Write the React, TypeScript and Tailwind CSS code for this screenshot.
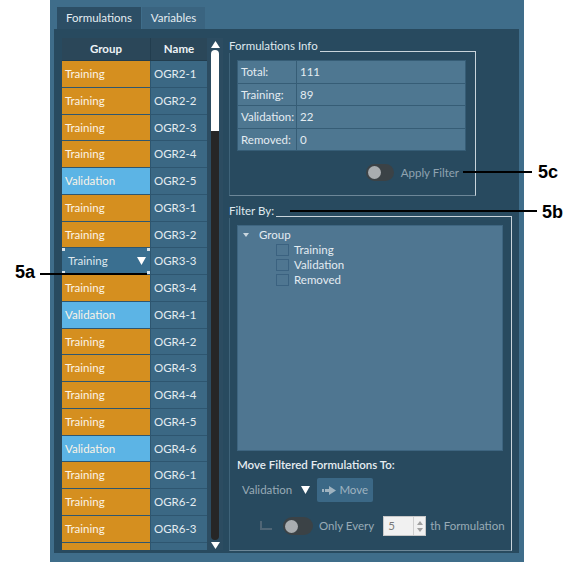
import React from 'react';

type Row = { group: 'Training' | 'Validation'; name: string; selected?: boolean };

const rows: Row[] = [
  { group: 'Training', name: 'OGR2-1' },
  { group: 'Training', name: 'OGR2-2' },
  { group: 'Training', name: 'OGR2-3' },
  { group: 'Training', name: 'OGR2-4' },
  { group: 'Validation', name: 'OGR2-5' },
  { group: 'Training', name: 'OGR3-1' },
  { group: 'Training', name: 'OGR3-2' },
  { group: 'Training', name: 'OGR3-3', selected: true },
  { group: 'Training', name: 'OGR3-4' },
  { group: 'Validation', name: 'OGR4-1' },
  { group: 'Training', name: 'OGR4-2' },
  { group: 'Training', name: 'OGR4-3' },
  { group: 'Training', name: 'OGR4-4' },
  { group: 'Training', name: 'OGR4-5' },
  { group: 'Validation', name: 'OGR4-6' },
  { group: 'Training', name: 'OGR6-1' },
  { group: 'Training', name: 'OGR6-2' },
  { group: 'Training', name: 'OGR6-3' },
  { group: 'Training', name: '' },
];

const info = [
  ['Total:', '111'],
  ['Training:', '89'],
  ['Validation:', '22'],
  ['Removed:', '0'],
];

function Toggle({ w, h }: { w: string; h: string }) {
  return (
    <div className={`${w} ${h} shrink-0 rounded-full bg-[#3b4246] flex items-center pl-[2px]`}>
      <div className="w-[13px] h-[13px] rounded-full bg-[#a9adb0]" />
    </div>
  );
}

function Corner({ pos }: { pos: string }) {
  return <div className={`absolute w-[3px] h-[3px] bg-white/80 ${pos}`} />;
}

function GroupCell({ row }: { row: Row }) {
  if (row.selected) {
    return (
      <div className="relative w-[89px] shrink-0 border-r border-[#2e5670] bg-[#3a6f90] flex items-center justify-between pl-[6px] pr-[4px] text-[#dfe8ee]">
        <span>Training</span>
        <svg width="9" height="8" viewBox="0 0 9 8">
          <path d="M0 0 H9 L4.5 8 Z" fill="#ffffff" />
        </svg>
        <Corner pos="left-0 top-0" />
        <Corner pos="right-0 top-0" />
        <Corner pos="left-0 bottom-0" />
        <Corner pos="right-0 bottom-0" />
      </div>
    );
  }
  const bg = row.group === 'Training' ? 'bg-[#d58f1f]' : 'bg-[#5cb4e5]';
  return (
    <div className={`w-[89px] shrink-0 border-r border-[#2e5670] ${bg} flex items-center pl-[3px] text-[#fbf3e6]`}>
      {row.name ? row.group : ''}
    </div>
  );
}

export default function App() {
  return (
    <div className="relative w-[583px] h-[562px] bg-white overflow-hidden font-['Lato',sans-serif] text-[11.5px] leading-none">
      <div className="ml-[50px] w-[474px] h-full bg-[#3f6d8a] flex flex-col pt-[7px] pl-[4px] pr-[5px] pb-[9px]">
        {/* Tabs */}
        <div className="flex pl-[3px] h-[22px] shrink-0">
          <div className="w-[84px] bg-[#2c4e65] text-[#e4ecf1] flex items-center justify-center">Formulations</div>
          <div className="w-[63px] ml-px bg-[#3a6480] text-[#e4ecf1] flex items-center justify-center">Variables</div>
        </div>

        {/* Panel */}
        <div className="flex-1 bg-[#284a5f] flex pl-[8px] pt-[9px]">
          {/* Table */}
          <div className="w-[145px] h-[512px] overflow-hidden flex flex-col shrink-0">
            <div className="h-[23px] shrink-0 flex bg-[#2b4759] border-b border-[#223d4e] font-bold text-[#eef3f6]">
              <div className="w-[89px] border-r border-[#223d4e] flex items-center justify-center">Group</div>
              <div className="flex-1 flex items-center justify-center">Name</div>
            </div>
            {rows.map((r, i) => (
              <div key={i} className="h-[26.75px] shrink-0 flex border-b border-[#2e5670]">
                <GroupCell row={r} />
                <div className="flex-1 bg-[#3b6884] flex items-center pl-[3px] text-[#e4ecf1]">{r.name}</div>
              </div>
            ))}
          </div>

          {/* Scrollbar */}
          <div className="w-[16px] h-[512px] shrink-0 flex flex-col items-center bg-[#2c4c61]">
            <svg className="mt-[3px]" width="9" height="7" viewBox="0 0 9 7">
              <path d="M4.5 0 L9 7 H0 Z" fill="#ffffff" />
            </svg>
            <div className="mt-[2px] w-[8px] h-[81px] rounded-t-full bg-white" />
            <div className="w-[8px] h-[409px] rounded-b-full bg-[#262626]" />
            <svg className="mt-[2px]" width="9" height="7" viewBox="0 0 9 7">
              <path d="M0 0 H9 L4.5 7 Z" fill="#ffffff" />
            </svg>
          </div>

          {/* Right section */}
          <div className="ml-[6px] w-[283px] flex flex-col">
            {/* Formulations Info */}
            <div className="w-[247px] flex flex-col">
              <div className="flex items-end h-[15px]">
                <span className="text-[#dfe8ee] leading-[15px]">Formulations Info</span>
                <div className="flex-1 ml-[2px] h-[2px] border-t border-r border-[#c9d4db]" />
              </div>
              <div className="h-[143px] border-l border-r border-b border-l-[#3f6379] border-r-[#c9d4db] border-b-[#6d8798] pl-[7px] pt-[7px] pr-[9px] flex flex-col">
                <div className="flex flex-col bg-[#365d76] gap-px p-px">
                  {info.map(([k, v]) => (
                    <div key={k} className="flex gap-px h-[21.5px]">
                      <div className="w-[58px] bg-[#4e7791] flex items-center pl-[3px] text-[#e4ecf1]">{k}</div>
                      <div className="flex-1 bg-[#4e7791] flex items-center pl-[3px] text-[#e4ecf1]">{v}</div>
                    </div>
                  ))}
                </div>
                <div className="mt-[13px] flex items-center justify-end pr-[7px] gap-[7px]">
                  <Toggle w="w-[28px]" h="h-[17px]" />
                  <span className="text-[#8fa3b0]">Apply Filter</span>
                </div>
              </div>
            </div>

            {/* Filter By */}
            <div className="mt-[7px] flex flex-col flex-1">
              <div className="flex items-end h-[15px]">
                <span className="text-[#dfe8ee] leading-[15px]">Filter By:</span>
                <div className="flex-1 ml-[2px] h-[2px] border-t border-r border-[#c9d4db]" />
              </div>
              <div className="h-[333px] border-l border-r border-b border-l-[#3f6379] border-r-[#c9d4db] border-b-[#6d8798] pl-[7px] pt-[7px] pr-[8px] flex flex-col">
                <div className="h-[226px] bg-[#4f7691] border border-[#3e6580] flex flex-col pt-px text-[#e4ecf1]">
                  <div className="flex items-center h-[15px]">
                    <svg className="ml-[5px]" width="6" height="4" viewBox="0 0 6 4">
                      <path d="M0 0 H6 L3 4 Z" fill="#c9d6de" />
                    </svg>
                    <span className="ml-[10px]">Group</span>
                  </div>
                  {['Training', 'Validation', 'Removed'].map((t) => (
                    <div key={t} className="flex items-center h-[15px] pl-[38px]">
                      <div className="w-[13px] h-[12px] border border-[#3b6280]" />
                      <span className="ml-[5px]">{t}</span>
                    </div>
                  ))}
                </div>
                <div className="mt-[6px] text-[#e6edf1] font-semibold leading-[15px]">Move Filtered Formulations To:</div>
                <div className="mt-[6px] flex items-center h-[24px]">
                  <span className="ml-[5px] text-[#98aab6]">Validation</span>
                  <svg className="ml-[9px]" width="9" height="8" viewBox="0 0 9 8">
                    <path d="M0 0 H9 L4.5 8 Z" fill="#ffffff" />
                  </svg>
                  <div className="ml-[7px] w-[56px] h-[24px] rounded-[2px] bg-[#3b6886] flex items-center justify-center gap-[3px] text-[#9fb3c0]">
                    <svg width="14" height="9" viewBox="0 0 14 9">
                      <rect x="0" y="3" width="2" height="3" fill="#9fb3c0" />
                      <rect x="3" y="3" width="4" height="3" fill="#9fb3c0" />
                      <path d="M7 0 L14 4.5 L7 9 Z" fill="#9fb3c0" />
                    </svg>
                    <span>Move</span>
                  </div>
                </div>
                <div className="mt-[14px] flex items-center h-[20px] whitespace-nowrap">
                  <div className="ml-[23px] shrink-0 w-[12px] h-[9px] border-l-2 border-b-2 border-[#506676] -mt-[2px]" />
                  <div className="ml-[11px] shrink-0">
                    <Toggle w="w-[30px]" h="h-[18px]" />
                  </div>
                  <span className="ml-[6px] shrink-0 text-[#98aab6]">Only Every</span>
                  <div className="ml-[9px] shrink-0 w-[43px] h-[20px] bg-[#f1f1f1] border border-[#c8c8c8] flex">
                    <span className="flex-1 flex items-center pl-[4px] text-[#7a7a7a]">5</span>
                    <div className="w-[12px] border-l border-[#cfcfcf] flex flex-col items-center justify-center gap-[3px]">
                      <svg width="6" height="4" viewBox="0 0 6 4"><path d="M3 0 L6 4 H0 Z" fill="#a0a0a0" /></svg>
                      <svg width="6" height="4" viewBox="0 0 6 4"><path d="M0 0 H6 L3 4 Z" fill="#a0a0a0" /></svg>
                    </div>
                  </div>
                  <span className="ml-[4px] shrink-0 text-[#98aab6]">th Formulation</span>
                </div>
              </div>
            </div>
          </div>
        </div>
      </div>

      {/* Annotations */}
      <div className="absolute left-[15px] top-[262px] font-['Liberation_Sans',Arial,sans-serif] font-bold text-[18px] leading-[20px] text-black">5a</div>
      <div className="absolute left-[40px] top-[273px] w-[107px] h-[2px] bg-black" />
      <div className="absolute left-[542px] top-[202px] font-['Liberation_Sans',Arial,sans-serif] font-bold text-[18px] leading-[20px] text-black">5b</div>
      <div className="absolute left-[290px] top-[210px] w-[247px] h-[2px] bg-black" />
      <div className="absolute left-[538px] top-[162px] font-['Liberation_Sans',Arial,sans-serif] font-bold text-[18px] leading-[20px] text-black">5c</div>
      <div className="absolute left-[463px] top-[171px] w-[69px] h-[2px] bg-black" />
    </div>
  );
}
